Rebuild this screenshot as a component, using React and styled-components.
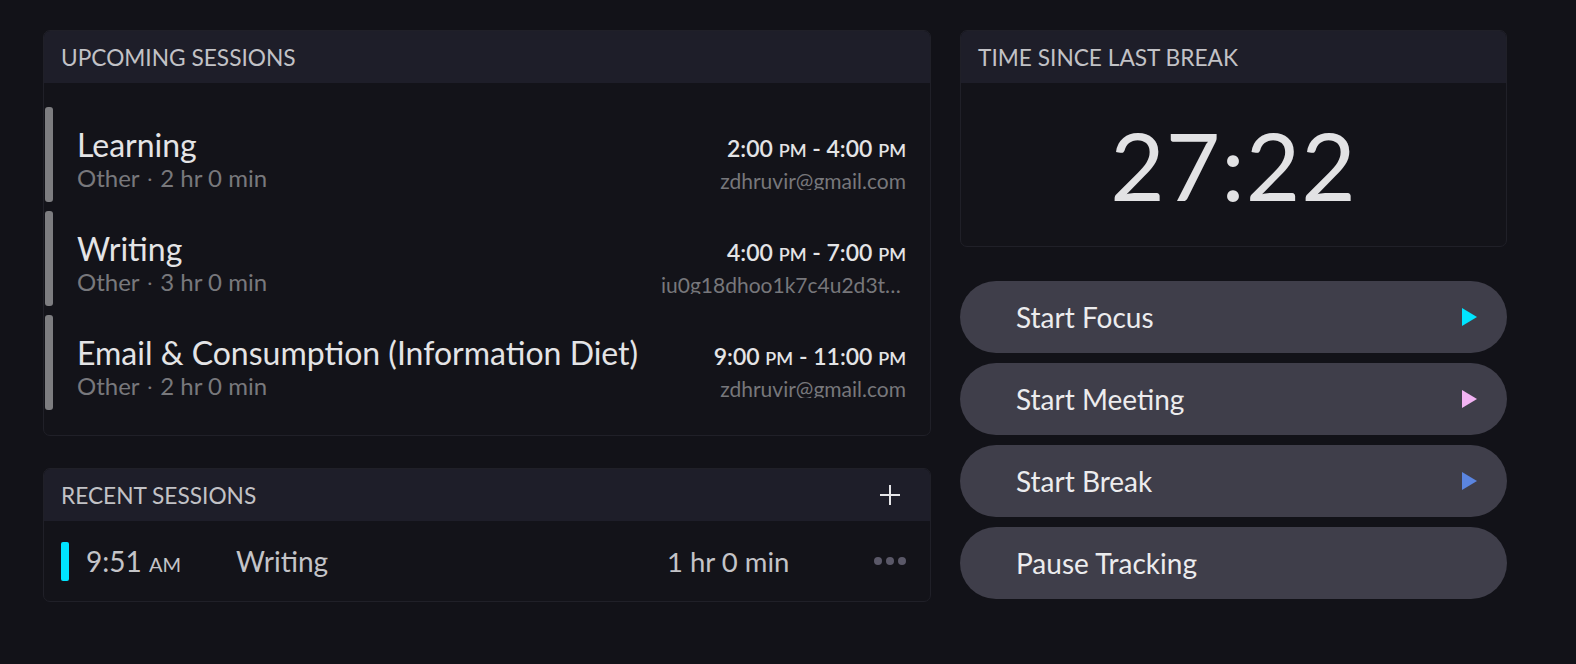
import React from "react";
import styled, { createGlobalStyle } from "styled-components";

const Global = createGlobalStyle`
  html, body { margin: 0; padding: 0; background: #121218; overflow: hidden; }
  body { font-family: Lato, "Noto Sans", sans-serif; color: #e6e6e6; }
  * { box-sizing: border-box; }
`;

const Page = styled.div`
  display: flex;
  align-items: flex-start;
  gap: 29px;
  padding: 30px 0 0 43px;
  height: 664px;
  background: #121218;
`;

const Column = styled.div`
  flex: none;
  display: flex;
  flex-direction: column;
  gap: ${(p) => p.$gap}px;
  width: ${(p) => p.$width}px;
`;

const Card = styled.section`
  border: 1px solid #202028;
  border-radius: 7px;
  overflow: hidden;
  background: #131319;
`;

const CardHeader = styled.header`
  height: 52px;
  display: flex;
  align-items: center;
  justify-content: space-between;
  padding: 0 30px 0 17px;
  background: #1e1e29;
  font-size: 22.7px;
  color: #c2c2c6;
  text-transform: uppercase;
`;

const UpcomingBody = styled.div`
  display: flex;
  flex-direction: column;
  gap: 9px;
  padding: 24px 0 25px 1px;
`;

const SessionRow = styled.div`
  display: flex;
  align-items: flex-start;
  height: 95px;
  padding-right: 24px;
`;

const Bar = styled.div`
  flex: none;
  align-self: stretch;
  width: 8px;
  border-radius: 3px;
  background: #7d7d80;
`;

const SessionMain = styled.div`
  flex: 1;
  display: flex;
  flex-direction: column;
  padding: 21px 0 0 24px;
  min-width: 0;
`;

const Title = styled.div`
  font-size: 32px;
  line-height: 34px;
  color: #e4e4e6;
  white-space: nowrap;
`;

const Sub = styled.div`
  font-size: 24px;
  line-height: 32px;
  color: #78787c;
`;

const Dot = styled.span`
  margin: 0 8px;
  font-size: 18px;
  vertical-align: 2px;
`;

const SessionSide = styled.div`
  display: flex;
  flex-direction: column;
  align-items: flex-end;
  flex: none;
  padding-top: 24px;
`;

const TimeRange = styled.div`
  font-size: 23px;
  font-weight: 600;
  line-height: 34px;
  color: #e4e4e6;
  white-space: nowrap;
`;

const Small = styled.span`
  font-size: 18px;
  font-weight: 600;
`;

const Email = styled.div`
  max-width: 245px;
  font-size: 21px;
  line-height: 21px;
  height: 20px;
  margin-top: 3px;
  overflow: hidden;
  white-space: nowrap;
  text-overflow: ellipsis;
  color: #77777b;
`;

const RecentRow = styled.div`
  display: flex;
  align-items: center;
  height: 80px;
  padding: 0 24px 0 17px;
  color: #c4c4c8;
`;

const RecentBar = styled.div`
  width: 8px;
  height: 39px;
  border-radius: 2px;
  background: #00e4ff;
  flex: none;
`;

const RecentTime = styled.div`
  width: 167px;
  padding-left: 17px;
  font-size: 28px;
  flex: none;
`;

const RecentAm = styled.span`
  font-size: 20px;
`;

const RecentName = styled.div`
  flex: 1;
  font-size: 28px;
`;

const RecentDur = styled.div`
  font-size: 27.5px;
  width: 207px;
  flex: none;
`;

const Dots = styled.div`
  display: flex;
  gap: 4px;
  span {
    width: 8px;
    height: 8px;
    border-radius: 50%;
    background: #5a5868;
  }
`;

const PlusBtn = styled.div`
  width: 20px;
  height: 20px;
  position: relative;
  &::before, &::after {
    content: "";
    position: absolute;
    background: #e6e6e8;
  }
  &::before { left: 9px; top: 0; width: 2px; height: 20px; }
  &::after { top: 9px; left: 0; height: 2px; width: 20px; }
`;

const TimerBody = styled.div`
  height: 163px;
  display: flex;
  align-items: center;
  justify-content: center;
  font-size: 94px;
  font-weight: 400;
  color: #e2e2e4;
  letter-spacing: 1px;
  padding-bottom: 0;
`;

const Buttons = styled.div`
  display: flex;
  flex-direction: column;
  gap: 10px;
  margin-top: 34px;
`;

const ActionButton = styled.button`
  display: flex;
  align-items: center;
  justify-content: space-between;
  height: 72px;
  border: none;
  border-radius: 36px;
  background: #3f3e4a;
  padding: 0 30px 0 56px;
  font-family: Lato, "Noto Sans", sans-serif;
  font-size: 28px;
  color: #ececee;
  cursor: pointer;
`;

const Play = styled.span`
  width: 0;
  height: 0;
  border-top: 9px solid transparent;
  border-bottom: 9px solid transparent;
  border-left: 15px solid ${(p) => p.$color};
`;

const upcoming = [
  { title: "Learning", sub: "2 hr 0 min", from: "2:00", to: "4:00", email: "zdhruvir@gmail.com" },
  { title: "Writing", sub: "3 hr 0 min", from: "4:00", to: "7:00", email: "iu0g18dhoo1k7c4u2d3tbnl5ck@group.calendar.google.com" },
  { title: "Email & Consumption (Information Diet)", sub: "2 hr 0 min", from: "9:00", to: "11:00", email: "zdhruvir@gmail.com" },
];

const actions = [
  { label: "Start Focus", color: "#00e5ff" },
  { label: "Start Meeting", color: "#f2b3f3" },
  { label: "Start Break", color: "#5b85e0" },
  { label: "Pause Tracking", color: null },
];

export default function App() {
  return (
    <>
      <Global />
      <Page>
        <Column $width={888} $gap={32}>
          <Card>
            <CardHeader>Upcoming Sessions</CardHeader>
            <UpcomingBody>
              {upcoming.map((s) => (
                <SessionRow key={s.title}>
                  <Bar />
                  <SessionMain>
                    <Title>{s.title}</Title>
                    <Sub>
                      Other<Dot>·</Dot>{s.sub}
                    </Sub>
                  </SessionMain>
                  <SessionSide>
                    <TimeRange>
                      {s.from} <Small>PM</Small> - {s.to} <Small>PM</Small>
                    </TimeRange>
                    <Email>{s.email}</Email>
                  </SessionSide>
                </SessionRow>
              ))}
            </UpcomingBody>
          </Card>
          <Card>
            <CardHeader>
              Recent Sessions
              <PlusBtn />
            </CardHeader>
            <RecentRow>
              <RecentBar />
              <RecentTime>
                9:51 <RecentAm>AM</RecentAm>
              </RecentTime>
              <RecentName>Writing</RecentName>
              <RecentDur>1 hr 0 min</RecentDur>
              <Dots>
                <span />
                <span />
                <span />
              </Dots>
            </RecentRow>
          </Card>
        </Column>
        <Column $width={547} $gap={0}>
          <Card>
            <CardHeader>Time Since Last Break</CardHeader>
            <TimerBody>27:22</TimerBody>
          </Card>
          <Buttons>
            {actions.map((a) => (
              <ActionButton key={a.label}>
                {a.label}
                {a.color && <Play $color={a.color} />}
              </ActionButton>
            ))}
          </Buttons>
        </Column>
      </Page>
    </>
  );
}
